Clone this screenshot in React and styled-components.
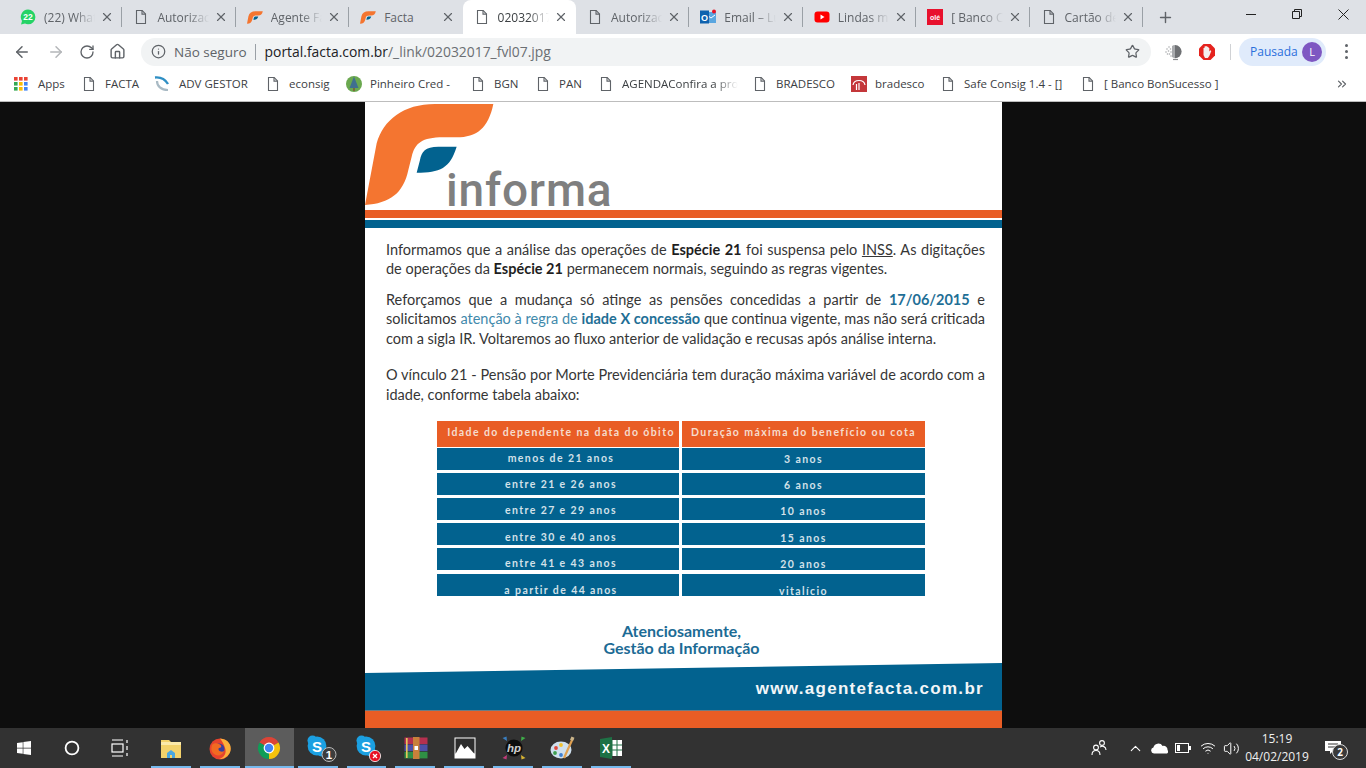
import React from "react";
import styled, { createGlobalStyle } from "styled-components";
import { ArrowLeft, ArrowRight, RotateCw, Home, Star, Info, X, Plus, ChevronUp, Wifi, Volume2, ChevronsRight } from "lucide-react";
import { FaWindows } from "react-icons/fa";

const UI = `"Open Sans", "Noto Sans", sans-serif`;

const Global = createGlobalStyle`
  html, body { margin: 0; height: 100%; overflow: hidden; background: #0e0e0e; }
  #root { height: 100%; }
  * { box-sizing: border-box; }
`;

const Page = styled.div`
  height: 768px;
  display: flex;
  flex-direction: column;
  font-family: ${UI};
`;

/* ---- tabs ---- */
const TabStrip = styled.div`
  height: 34px;
  flex: none;
  background: #dee1e6;
  display: flex;
  padding-left: 9px;
`;
const Tab = styled.div`
  position: relative;
  flex: 0 0 113.4px;
  min-width: 0;
  display: flex;
  align-items: center;
  padding: 0 8px 0 11px;
  gap: 8px;
  background: ${(p) => (p.$active ? "#fff" : "transparent")};
  border-radius: 8px 8px 0 0;
  color: ${(p) => (p.$active ? "#3c4043" : "#5f6368")};
  &::after {
    content: "";
    display: ${(p) => (p.$sep ? "block" : "none")};
    position: absolute;
    right: 0;
    top: 7px;
    height: 20px;
    width: 1px;
    background: #9aa0a6;
  }
`;
const TabIcon = styled.span`
  width: 16px;
  height: 16px;
  flex: none;
  display: flex;
  align-items: center;
  justify-content: center;
`;
const TabTitle = styled.span`
  flex: 1;
  min-width: 0;
  margin-right: -3px;
  font-size: 12px;
  white-space: nowrap;
  -webkit-mask-image: ${(p) => (p.$plain ? "none" : "linear-gradient(90deg, #000 60%, transparent 100%)")};
  mask-image: ${(p) => (p.$plain ? "none" : "linear-gradient(90deg, #000 60%, transparent 100%)")};
`;
const TabClose = styled(X)`
  flex: none;
  color: #5f6368;
`;
const NewTab = styled.div`
  width: 46px;
  display: flex;
  align-items: center;
  justify-content: center;
  color: #5f6368;
`;
const WindowButtons = styled.div`
  margin-left: auto;
  display: flex;
  align-self: flex-start;
`;
const WindowButton = styled.div`
  width: 46px;
  height: 28px;
  display: flex;
  align-items: center;
  justify-content: center;
  color: #222;
`;

/* ---- toolbar ---- */
const Toolbar = styled.div`
  height: 33px;
  flex: none;
  background: #fff;
  display: flex;
  align-items: center;
  padding: 2px 0 0 6px;
`;
const NavButton = styled.div`
  width: ${(p) => p.$w || 32}px;
  display: flex;
  justify-content: center;
  color: ${(p) => (p.$off ? "#b4b6b9" : "#5f6368")};
`;
const Omnibox = styled.div`
  width: 1010px;
  height: 28px;
  margin-left: 6px;
  border-radius: 14px;
  background: #f1f3f4;
  display: flex;
  align-items: center;
  padding: 0 10px 0 10px;
  font-size: 13.9px;
`;
const Secure = styled.span`
  color: #5f6368;
  font-size: 13.5px;
  margin-left: 8px;
`;
const OmniDivider = styled.span`
  width: 1px;
  height: 16px;
  background: #9aa0a6;
  margin: 0 9px 0 8px;
`;
const Host = styled.span`
  color: #202124;
`;
const Path = styled.span`
  color: #6b6f73;
`;
const OmniStar = styled(Star)`
  margin-left: auto;
  margin-right: 1px;
  color: #5f6368;
`;
const Extensions = styled.div`
  display: flex;
  margin-left: 6px;
`;
const ExtButton = styled.div`
  width: 33px;
  display: flex;
  justify-content: center;
`;
const ToolDivider = styled.span`
  width: 1px;
  height: 16px;
  background: #d0d2d5;
  margin: 0 8px 0 7px;
`;
const ProfileChip = styled.div`
  width: 87px;
  height: 28px;
  border-radius: 14px;
  background: #e0ebfb;
  color: #2a6fdb;
  font-size: 12px;
  display: flex;
  align-items: center;
  justify-content: space-between;
  padding: 0 4px 0 11px;
`;
const Avatar = styled.span`
  width: 20px;
  height: 20px;
  border-radius: 50%;
  background: #7e57c2;
  color: #fff;
  font-size: 11px;
  display: flex;
  align-items: center;
  justify-content: center;
`;
const MenuDots = styled.div`
  flex: 1;
  display: flex;
  flex-direction: column;
  align-items: center;
  gap: 3px;
  span {
    width: 3px;
    height: 3px;
    border-radius: 50%;
    background: #5f6368;
  }
`;

/* ---- bookmarks ---- */
const BookmarksBar = styled.div`
  height: 35px;
  flex: none;
  background: #fff;
  border-bottom: 1px solid #bdbdbd;
  display: flex;
  align-items: center;
  padding-left: 14px;
`;
const Bookmark = styled.div`
  flex: 0 0 ${(p) => p.$w}px;
  display: flex;
  align-items: center;
  gap: ${(p) => p.$gap || 8}px;
  font-size: 11.5px;
  color: #3c4043;
  white-space: nowrap;
`;
const BookmarkText = styled.span`
  margin-top: -1px;
  ${(p) =>
    p.$fade &&
    `-webkit-mask-image: linear-gradient(90deg, #000 80%, transparent 100%);
     mask-image: linear-gradient(90deg, #000 80%, transparent 100%);`}
`;
const MoreBookmarks = styled(ChevronsRight)`
  margin-left: auto;
  margin-right: 17px;
  color: #5f6368;
`;

/* ---- the flyer ---- */
const Viewer = styled.div`
  flex: 1;
  min-height: 0;
  background: #0e0e0e;
  display: flex;
  justify-content: center;
`;
const Flyer = styled.div`
  width: 637px;
  margin-left: 1px;
  background: #fff;
  overflow: hidden;
  display: flex;
  flex-direction: column;
`;
const Masthead = styled.div`
  height: 108px;
  flex: none;
  display: flex;
  align-items: flex-start;
`;
const Wordmark = styled.div`
  margin: 65px 0 0 -49px;
  font-family: "Roboto", "Liberation Sans", sans-serif;
  font-weight: 500;
  font-size: 46px;
  line-height: 46px;
  letter-spacing: 0.8px;
  color: #7f7f7f;
`;
const Stripe = styled.div`
  height: 8px;
  flex: none;
  margin-bottom: 2px;
  background: ${(p) => p.$color};
`;
const Letter = styled.div`
  padding: 9.5px 17px 0 21px;
  font-family: "Lato", "Open Sans", sans-serif;
  font-size: 14.5px;
  line-height: 19.5px;
  color: #363636;
`;
const Para = styled.div`
  margin-bottom: ${(p) => p.$gap || 0}px;
`;
const Line = styled.div`
  text-align: ${(p) => (p.$fill ? "justify" : "left")};
  text-align-last: ${(p) => (p.$fill ? "justify" : "left")};
  white-space: nowrap;
`;
const Strong = styled.b`
  font-weight: 700;
  color: ${(p) => p.$color || "#1f1f1f"};
`;
const Tint = styled.span`
  color: #4189ab;
`;
const Under = styled.span`
  text-decoration: underline;
`;
const DurationTable = styled.div`
  margin: 17px 0 0 72px;
  width: 488px;
  display: grid;
  grid-template-columns: 242px 243px;
  column-gap: 3px;
  row-gap: 3px;
  font-family: "Lato", "Liberation Sans", sans-serif;
  font-weight: 700;
  letter-spacing: 1.4px;
`;
const HeadCell = styled.div`
  height: 26px;
  margin-bottom: -2px;
  padding-left: ${(p) => (p.$left ? 6 : 0)}px;
  background: #e95d25;
  color: #f6dccd;
  font-size: 10.5px;
  line-height: 22px;
  text-align: center;
  white-space: nowrap;
`;
const Cell = styled.div`
  height: 22px;
  margin-top: ${(p) => (p.$last ? 1 : 0)}px;
  padding-left: ${(p) => (p.$left ? 6 : 0)}px;
  background: #02628f;
  color: #d3e1e9;
  font-size: 10.5px;
  line-height: ${(p) => p.$line}px;
  text-align: center;
  overflow: hidden;
`;
const Signature = styled.div`
  margin-top: 26px;
  padding-right: 4px;
  text-align: center;
  font-family: "Lato", "Liberation Sans", sans-serif;
  font-weight: 700;
  font-size: 16px;
  line-height: 17px;
  color: #1c6b95;
`;
const Band = styled.div`
  height: 47px;
  flex: none;
  margin-top: 7px;
  background: #02628f;
  clip-path: polygon(0 10px, 100% 0, 100% 100%, 0 100%);
  display: flex;
  align-items: center;
  justify-content: flex-end;
  padding: 4px 18px 0 0;
  color: #f2f6f8;
  font-family: "Liberation Sans", sans-serif;
  font-weight: 700;
  font-size: 17px;
  letter-spacing: 1.3px;
`;
const FootBar = styled.div`
  height: 18px;
  flex: none;
  background: #e95d25;
  border-top: 1px solid #6d7c83;
`;

/* ---- taskbar ---- */
const Taskbar = styled.div`
  height: 40px;
  flex: none;
  background: #323232;
  display: flex;
  align-items: stretch;
  color: #fff;
`;
const ShellButton = styled.div`
  width: 48px;
  display: flex;
  align-items: center;
  justify-content: center;
`;
const AppList = styled.div`
  display: flex;
  margin-left: 3px;
`;
const AppSlot = styled.div`
  position: relative;
  width: 48.9px;
  display: flex;
  align-items: center;
  justify-content: center;
  background: ${(p) => (p.$active ? "#5c5c5c" : "transparent")};
  &::after {
    content: "";
    position: absolute;
    bottom: 0;
    left: ${(p) => (p.$active ? 0 : 4)}px;
    right: ${(p) => (p.$active ? 0 : 5)}px;
    height: 2px;
    background: #76b9ed;
  }
`;
const Tray = styled.div`
  margin-left: auto;
  display: flex;
  align-items: center;
`;
const TrayIcon = styled.div`
  width: ${(p) => p.$w || 24}px;
  margin-right: ${(p) => p.$after || 0}px;
  display: flex;
  justify-content: center;
`;
const Clock = styled.div`
  width: 72px;
  text-align: center;
  font-size: 12px;
  line-height: 18px;
  white-space: nowrap;
  color: #f0f0f0;
`;
const Notify = styled.div`
  position: relative;
  width: 40px;
  margin-right: 13px;
  display: flex;
  justify-content: center;
  align-items: center;
`;
const NotifyBadge = styled.span`
  position: absolute;
  left: 19px;
  top: 3px;
  width: 16px;
  height: 16px;
  border-radius: 50%;
  border: 1px solid #ddd;
  background: #3a3a3a;
  color: #fff;
  font-size: 10px;
  font-weight: 700;
  display: flex;
  align-items: center;
  justify-content: center;
`;

/* ---- drawings ---- */
const DocIcon = () => (
  <svg width="16" height="16" viewBox="0 0 16 16" fill="none" stroke="#5f6368" strokeWidth="1.1">
    <path d="M3.5 1.5h5.7l3.3 3.4v9.6h-9z" />
    <path d="M9 1.5v3.6h3.5" />
  </svg>
);

const LogoF = ({ width, height }) => (
  <svg width={width} height={height} viewBox="15 6 390 315">
    <path
      fill="#f47530"
      d="M400 12L225 12C130 12 70 60 50 130L15 315C90 310 130 280 145 210L155 170C165 130 185 112 250 112L290 112C350 112 385 85 400 12Z"
    />
    <path fill="#02628f" d="M290 140L235 140C195 140 185 155 180 180L170 218C240 218 270 205 290 140Z" />
  </svg>
);

const WhatsIcon = () => (
  <svg width="16" height="16" viewBox="0 0 16 16">
    <path fill="#25d366" d="M8 0.5a7.4 7.4 0 0 1 0 14.8a7.4 7.4 0 0 1-3-.7L1 15.5l1-3.6A7.4 7.4 0 0 1 8 .5z" />
    <text x="8" y="11" textAnchor="middle" fontSize="8.5" fontWeight="700" fill="#fff" fontFamily="Liberation Sans">22</text>
  </svg>
);
const OutlookIcon = () => (
  <svg width="16" height="16" viewBox="0 0 16 16">
    <rect x="5" y="3" width="11" height="11" fill="#5aa6e0" />
    <path d="M7 6l4 3 4-3" stroke="#fff" fill="none" />
    <circle cx="14" cy="2.5" r="2" fill="#e81123" />
    <rect x="0" y="1.5" width="9" height="13" fill="#0f62ae" />
    <text x="4.5" y="11.5" textAnchor="middle" fontSize="9" fontWeight="700" fill="#fff" fontFamily="Liberation Sans">O</text>
  </svg>
);
const YoutubeIcon = () => (
  <svg width="16" height="16" viewBox="0 0 16 16">
    <rect x="0.5" y="2.5" width="15" height="11" rx="3" fill="#f00" />
    <path d="M6.5 5.5l4 2.5-4 2.5z" fill="#fff" />
  </svg>
);
const OleIcon = () => (
  <svg width="16" height="16" viewBox="0 0 16 16">
    <rect width="16" height="16" fill="#e8112d" />
    <text x="8" y="10.5" textAnchor="middle" fontSize="7" fontWeight="700" fill="#fff" fontFamily="Liberation Sans">olé</text>
  </svg>
);
const AppsIcon = () => (
  <svg width="14" height="14" viewBox="0 0 14 14">
    {["#ea4335", "#ea4335", "#ea4335", "#34a853", "#fbbc05", "#4285f4", "#34a853", "#fbbc05", "#4285f4"].map((c, i) => (
      <rect key={i} x={(i % 3) * 5} y={Math.floor(i / 3) * 5} width="3.6" height="3.6" fill={c} />
    ))}
  </svg>
);
const AdvIcon = () => (
  <svg width="16" height="16" viewBox="0 0 16 16" fill="none">
    <path d="M1 1.5C6 1 11 3 14 8" stroke="#2f8fc4" strokeWidth="2.4" />
    <path d="M3 5c0 5 4 9 11 9" stroke="#a9bac4" strokeWidth="2.2" />
  </svg>
);
const PineIcon = () => (
  <svg width="16" height="16" viewBox="0 0 16 16">
    <circle cx="8" cy="8" r="8" fill="#6aa84f" />
    <path d="M8 0.5L12.5 12h-9z" fill="#3f6f8f" />
    <rect x="7" y="12" width="2" height="3" fill="#7a6a3a" />
  </svg>
);
const BradescoIcon = () => (
  <svg width="16" height="16" viewBox="0 0 16 16" fill="none">
    <rect width="16" height="16" fill="#c4373a" />
    <path d="M2 9C3 3 13 3 14 9" stroke="#fff" strokeWidth="1.2" />
    <path d="M8 7v7M5.5 8v6" stroke="#fff" strokeWidth="1.2" />
  </svg>
);
const GlobeExt = () => (
  <svg width="18" height="18" viewBox="0 0 18 18">
    <path d="M10 2a6.6 6.6 0 0 1 0 13.2z" fill="#6e7073" />
    <path d="M10 2a6.6 6.6 0 0 0-3 1v11a6.6 6.6 0 0 0 3 1.2z" fill="#a8aaad" />
    <path d="M8 16.5h5" stroke="#8a8c8f" strokeWidth="1.2" />
    {[[2, 6], [4, 4], [1, 9], [3.5, 8], [5.5, 6], [2.5, 11], [4.5, 11], [6, 9], [6, 13]].map(([x, y], i) => (
      <circle key={i} cx={x} cy={y} r="0.8" fill="#a8aaad" />
    ))}
  </svg>
);
const StopExt = () => (
  <svg width="18" height="18" viewBox="0 0 18 18">
    <path d="M5.5 1h7L17 5.5v7L12.5 17h-7L1 12.5v-7z" fill="#e5231e" />
    <path d="M5.5 8V5h1V3.6h1V3h1v.6h1V4h1v1h.8v3.5l1-1.2 1 .6-2 5-1.5 2H7L5.5 12z" fill="#f4f0ee" />
  </svg>
);

const ExplorerIcon = () => (
  <svg width="24" height="24" viewBox="0 0 24 24">
    <path d="M2 4h8l2 2h10v16H2z" fill="#f3d26b" />
    <rect x="2" y="6" width="20" height="3" fill="#fbe9a9" />
    <path d="M8 22v-5l4-3 4 3v5h-3v-3h-2v3z" fill="#4aa7e0" />
  </svg>
);
const FirefoxIcon = () => (
  <svg width="24" height="24" viewBox="0 0 24 24">
    <circle cx="12" cy="13" r="10.5" fill="#e8432d" />
    <path d="M12 2.5C20 3 24 9 22.5 15 20.5 21 15 23.5 11 23 16 22 19 17 17 12 16 8 14 5 12 2.5z" fill="#fbb03b" />
    <circle cx="11" cy="13" r="5.5" fill="#3a3f9e" />
    <path d="M4 9c2-2 4-2 7-1 3 1 3 4 0 4-2 2 2 5 5 3-1 5-8 6-11 2-2-2-2-5-1-8z" fill="#f26a21" />
  </svg>
);
const ChromeIcon = () => (
  <svg width="24" height="24" viewBox="0 0 24 24">
    <path fill="#db4437" d="M12 12L2.47 6.5A11 11 0 0 1 21.53 6.5Z" />
    <path fill="#f4c20d" d="M12 12L21.53 6.5A11 11 0 0 1 12 23Z" />
    <path fill="#0f9d58" d="M12 12L12 23A11 11 0 0 1 2.47 6.5Z" />
    <circle cx="12" cy="12" r="5.4" fill="#fff" />
    <circle cx="12" cy="12" r="4.2" fill="#4285f4" />
  </svg>
);
const SkypeIcon = ({ badge }) => (
  <svg width="38" height="28" viewBox="0 0 38 28">
    <circle cx="13.5" cy="6.5" r="5" fill="#1ba0e2" />
    <circle cx="22.5" cy="17.5" r="5" fill="#1ba0e2" />
    <circle cx="18" cy="12" r="9.4" fill="#1ba0e2" />
    <text x="18" y="17.5" textAnchor="middle" fontSize="15" fontWeight="700" fill="#fff" fontFamily="Liberation Sans">S</text>
    {badge === "1" && (
      <>
        <circle cx="30" cy="20.5" r="7" fill="#3d3d3d" stroke="#bbb" />
        <text x="30" y="24.8" textAnchor="middle" fontSize="11.5" fontWeight="700" fill="#fff" fontFamily="Liberation Sans">1</text>
      </>
    )}
    {badge === "x" && (
      <>
        <circle cx="27" cy="22" r="5.6" fill="#e81123" stroke="#fff" strokeWidth="0.8" />
        <path d="M25 20l4 4m0-4l-4 4" stroke="#fff" strokeWidth="1.3" />
      </>
    )}
  </svg>
);
const RarIcon = () => (
  <svg width="24" height="22" viewBox="0 0 24 22">
    <rect x="0.5" y="0.5" width="23" height="6.6" fill="#b5304f" />
    <rect x="0.5" y="7.5" width="23" height="6.6" fill="#4e4fa8" />
    <rect x="0.5" y="14.8" width="23" height="6.6" fill="#2f8f45" />
    <rect x="9" y="0" width="6.5" height="22" fill="#c8803b" />
    <rect x="10.5" y="9" width="3.5" height="4" fill="#fff" />
    <rect x="2" y="1" width="1.6" height="20" fill="#e6c65c" />
  </svg>
);
const PhotosIcon = () => (
  <svg width="22" height="22" viewBox="0 0 22 22">
    <rect x="0.5" y="0.5" width="21" height="21" fill="#fff" />
    <rect x="1.5" y="1.5" width="19" height="15" fill="#2d2d2d" />
    <path d="M1.5 17L7 7l3.5 5 3-3 7 8z" fill="#fff" />
  </svg>
);
const HpIcon = () => (
  <svg width="26" height="26" viewBox="0 0 26 26">
    <circle cx="13" cy="13" r="8.6" fill="#0d0d0d" />
    <text x="13" y="17" textAnchor="middle" fontSize="11.5" fontStyle="italic" fontWeight="700" fill="#cfcfcf" fontFamily="Liberation Sans">hp</text>
    <path d="M1.5 3l4-1.5 .5 4.5z" fill="#3a7fc1" />
    <path d="M24.5 3l-4-1.5-.5 4.5z" fill="#3fae49" />
    <path d="M1.5 23l4 1.5 .5-4.5z" fill="#c23b7a" />
    <path d="M24.5 23l-4 1.5-.5-4.5z" fill="#d9b431" />
  </svg>
);
const PaintIcon = () => (
  <svg width="26" height="26" viewBox="0 0 26 26">
    <ellipse cx="11" cy="15" rx="10.5" ry="8.5" fill="#cfe0ee" />
    <circle cx="6" cy="13" r="1.9" fill="#e0483c" />
    <circle cx="11" cy="10" r="1.9" fill="#f2c230" />
    <circle cx="5" cy="18" r="1.9" fill="#3e9e4f" />
    <circle cx="11" cy="20" r="1.9" fill="#3f7fd1" />
    <path d="M23 3L14 23" stroke="#e0a050" strokeWidth="2.2" />
    <path d="M21.5 1.5l3 1.2-1.5 3.3-3-1.2z" fill="#c9b48a" />
  </svg>
);
const ExcelIcon = () => (
  <svg width="24" height="24" viewBox="0 0 24 24">
    <rect x="9" y="4" width="14" height="16" fill="#fff" />
    <path d="M13 4v16M18 4v16M9 9h14M9 14h14" stroke="#1e7145" />
    <path d="M1 3l12-2v22L1 21z" fill="#1e7145" />
    <text x="7" y="16.5" textAnchor="middle" fontSize="12" fontWeight="700" fill="#fff" fontFamily="Liberation Sans">X</text>
  </svg>
);
const TaskViewIcon = () => (
  <svg width="18" height="20" viewBox="0 0 18 20" fill="none" stroke="#fff" strokeWidth="1.2">
    <rect x="1" y="6" width="11" height="8" />
    <path d="M1 2h11M1 18h11M16 2v3M16 8v4M16 15v3" />
  </svg>
);
const PeopleIcon = () => (
  <svg width="16" height="16" viewBox="0 0 16 16" fill="none" stroke="#fff" strokeWidth="1.1">
    <circle cx="5" cy="7.5" r="2.4" />
    <path d="M1 15c0-3 2-4.5 4-4.5S9 12 9 15" />
    <circle cx="11" cy="3" r="2.4" />
    <path d="M9 7c2.5-1.5 6-.5 6 3" />
  </svg>
);
const CloudIcon = () => (
  <svg width="18" height="12" viewBox="0 0 18 12">
    <path fill="#fff" d="M4 11.5a3 3 0 0 1-.6-5.9A5 5 0 0 1 12.6 4a3.8 3.8 0 0 1 4.9 4 2.4 2.4 0 0 1-.5 3.5z" />
  </svg>
);
const BatteryIcon = () => (
  <svg width="16" height="10" viewBox="0 0 16 10" fill="none">
    <rect x="0.5" y="0.5" width="13" height="9" stroke="#fff" />
    <rect x="2" y="2" width="3" height="6" fill="#fff" />
    <rect x="14" y="3" width="2" height="4" fill="#fff" />
  </svg>
);
const NotifyIcon = () => (
  <svg width="16" height="14" viewBox="0 0 16 14">
    <path fill="#fff" d="M0 0h16v10H8l-3 3v-3H0z" />
    <path d="M3 3h10M3 6h10" stroke="#323232" />
  </svg>
);

/* ---- data ---- */
const fIcon = <LogoF width={16} height={13} />;
const tabs = [
  { icon: <WhatsIcon />, title: "(22) What" },
  { icon: <DocIcon />, title: "Autorizac" },
  { icon: fIcon, title: "Agente Fa" },
  { icon: fIcon, title: "Facta", plain: true },
  { icon: <DocIcon />, title: "02032017", active: true },
  { icon: <DocIcon />, title: "Autorizac" },
  { icon: <OutlookIcon />, title: "Email – Lu" },
  { icon: <YoutubeIcon />, title: "Lindas mu" },
  { icon: <OleIcon />, title: "[ Banco C" },
  { icon: <DocIcon />, title: "Cartão de" },
];

const bookmarks = [
  { w: 67, icon: <AppsIcon />, text: "Apps", gap: 10 },
  { w: 73, icon: <DocIcon />, text: "FACTA" },
  { w: 111, icon: <AdvIcon />, text: "ADV GESTOR", gap: 9 },
  { w: 81, icon: <DocIcon />, text: "econsig" },
  { w: 124, icon: <PineIcon />, text: "Pinheiro Cred -" },
  { w: 65, icon: <DocIcon />, text: "BGN" },
  { w: 63, icon: <DocIcon />, text: "PAN" },
  { w: 154, icon: <DocIcon />, text: "AGENDAConfira a pro", fade: true },
  { w: 99, icon: <DocIcon />, text: "BRADESCO" },
  { w: 89, icon: <BradescoIcon />, text: "bradesco" },
  { w: 140, icon: <DocIcon />, text: "Safe Consig 1.4 - []" },
  { w: 190, icon: <DocIcon />, text: "[ Banco BonSucesso ]" },
];

const rows = [
  ["menos de 21 anos", "3 anos"],
  ["entre 21 e 26 anos", "6 anos"],
  ["entre 27 e 29 anos", "10 anos"],
  ["entre 30 e 40 anos", "15 anos"],
  ["entre 41 e 43 anos", "20 anos"],
  ["a partir de 44 anos", "vitalício"],
];
// the text sits lower in each row of the scanned table
const rowLines = [20, 22, 24, 28, 30, 32];

const apps = [
  <ExplorerIcon />,
  <FirefoxIcon />,
  <ChromeIcon />,
  <SkypeIcon badge="1" />,
  <SkypeIcon badge="x" />,
  <RarIcon />,
  <PhotosIcon />,
  <HpIcon />,
  <PaintIcon />,
  <ExcelIcon />,
];

const App = () => {
  return (
    <Page>
      <Global />
      <TabStrip>
        {tabs.map((t, i) => (
          <Tab key={i} $active={t.active} $sep={!t.active && i !== 3}>
            <TabIcon>{t.icon}</TabIcon>
            <TabTitle $plain={t.plain}>{t.title}</TabTitle>
            <TabClose size={14} strokeWidth={2} />
          </Tab>
        ))}
        <NewTab>
          <Plus size={17} strokeWidth={2} />
        </NewTab>
        <WindowButtons>
          <WindowButton>
            <svg width="10" height="10" viewBox="0 0 10 10" stroke="#222"><path d="M0 5.5h10" /></svg>
          </WindowButton>
          <WindowButton>
            <svg width="10" height="10" viewBox="0 0 10 10" fill="none" stroke="#222"><path d="M.5 2.5h7v7h-7zM2.5 2.5v-2h7v7h-2" /></svg>
          </WindowButton>
          <WindowButton>
            <svg width="11" height="11" viewBox="0 0 11 11" stroke="#222"><path d="M.5.5l10 10M10.5.5l-10 10" /></svg>
          </WindowButton>
        </WindowButtons>
      </TabStrip>

      <Toolbar>
        <NavButton><ArrowLeft size={18} strokeWidth={2} /></NavButton>
        <NavButton $w={35} $off><ArrowRight size={18} strokeWidth={2} /></NavButton>
        <NavButton $w={27}><RotateCw size={16} strokeWidth={2} /></NavButton>
        <NavButton $w={35}><Home size={17} strokeWidth={2} /></NavButton>
        <Omnibox>
          <Info size={15} color="#5f6368" strokeWidth={2} />
          <Secure>Não seguro</Secure>
          <OmniDivider />
          <Host>portal.facta.com.br</Host>
          <Path>/_link/02032017_fvl07.jpg</Path>
          <OmniStar size={15} strokeWidth={2} />
        </Omnibox>
        <Extensions>
          <ExtButton><GlobeExt /></ExtButton>
          <ExtButton><StopExt /></ExtButton>
        </Extensions>
        <ToolDivider />
        <ProfileChip>
          Pausada
          <Avatar>L</Avatar>
        </ProfileChip>
        <MenuDots><span /><span /><span /></MenuDots>
      </Toolbar>

      <BookmarksBar>
        {bookmarks.map((b, i) => (
          <Bookmark key={i} $w={b.w} $gap={b.gap}>
            {b.icon}
            <BookmarkText $fade={b.fade}>{b.text}</BookmarkText>
          </Bookmark>
        ))}
        <MoreBookmarks size={14} />
      </BookmarksBar>

      <Viewer>
        <Flyer>
          <Masthead>
            <LogoF width={130} height={105} />
            <Wordmark>informa</Wordmark>
          </Masthead>
          <Stripe $color="#e95d25" />
          <Stripe $color="#02628f" />
          <Letter>
            <Para $gap={11}>
              <Line $fill>
                Informamos que a análise das operações de <Strong>Espécie 21</Strong> foi suspensa pelo <Under>INSS</Under>. As digitações
              </Line>
              <Line>
                de operações da <Strong>Espécie 21</Strong> permanecem normais, seguindo as regras vigentes.
              </Line>
            </Para>
            <Para $gap={17}>
              <Line $fill>
                Reforçamos que a mudança só atinge as pensões concedidas a partir de <Strong $color="#1f6f96">17/06/2015</Strong> e
              </Line>
              <Line $fill>
                solicitamos <Tint>atenção à regra de</Tint> <Strong $color="#1f6f96">idade X concessão</Strong> que continua vigente, mas não será criticada
              </Line>
              <Line>com a sigla IR. Voltaremos ao fluxo anterior de validação e recusas após análise interna.</Line>
            </Para>
            <Para>
              <Line $fill>
                O vínculo 21 - Pensão por Morte Previdenciária tem duração máxima variável de acordo com a
              </Line>
              <Line>idade, conforme tabela abaixo:</Line>
            </Para>
          </Letter>
          <DurationTable>
            <HeadCell $left>Idade do dependente na data do óbito</HeadCell>
            <HeadCell>Duração máxima do benefício ou cota</HeadCell>
            {rows.map((r, i) => (
              <React.Fragment key={i}>
                <Cell $left $last={i === rows.length - 1} $line={rowLines[i]}>{r[0]}</Cell>
                <Cell $last={i === rows.length - 1} $line={rowLines[i] + 2}>{r[1]}</Cell>
              </React.Fragment>
            ))}
          </DurationTable>
          <Signature>
            Atenciosamente,
            <br />
            Gestão da Informação
          </Signature>
          <Band>www.agentefacta.com.br</Band>
          <FootBar />
        </Flyer>
      </Viewer>

      <Taskbar>
        <ShellButton><FaWindows size={16} color="#fff" /></ShellButton>
        <ShellButton>
          <svg width="16" height="16" viewBox="0 0 16 16" fill="none" stroke="#fff" strokeWidth="1.8"><circle cx="8" cy="8" r="6.4" /></svg>
        </ShellButton>
        <ShellButton><TaskViewIcon /></ShellButton>
        <AppList>
          {apps.map((a, i) => (
            <AppSlot key={i} $active={i === 2}>{a}</AppSlot>
          ))}
        </AppList>
        <Tray>
          <TrayIcon $after={12}><PeopleIcon /></TrayIcon>
          <TrayIcon><ChevronUp size={17} strokeWidth={1.5} /></TrayIcon>
          <TrayIcon><CloudIcon /></TrayIcon>
          <TrayIcon><BatteryIcon /></TrayIcon>
          <TrayIcon $w={26}><Wifi size={16} strokeWidth={1.5} /></TrayIcon>
          <TrayIcon $w={20}><Volume2 size={17} strokeWidth={1.4} /></TrayIcon>
          <Clock>
            15:19
            <br />
            04/02/2019
          </Clock>
          <Notify>
            <NotifyIcon />
            <NotifyBadge>2</NotifyBadge>
          </Notify>
        </Tray>
      </Taskbar>
    </Page>
  );
};

export default App;
